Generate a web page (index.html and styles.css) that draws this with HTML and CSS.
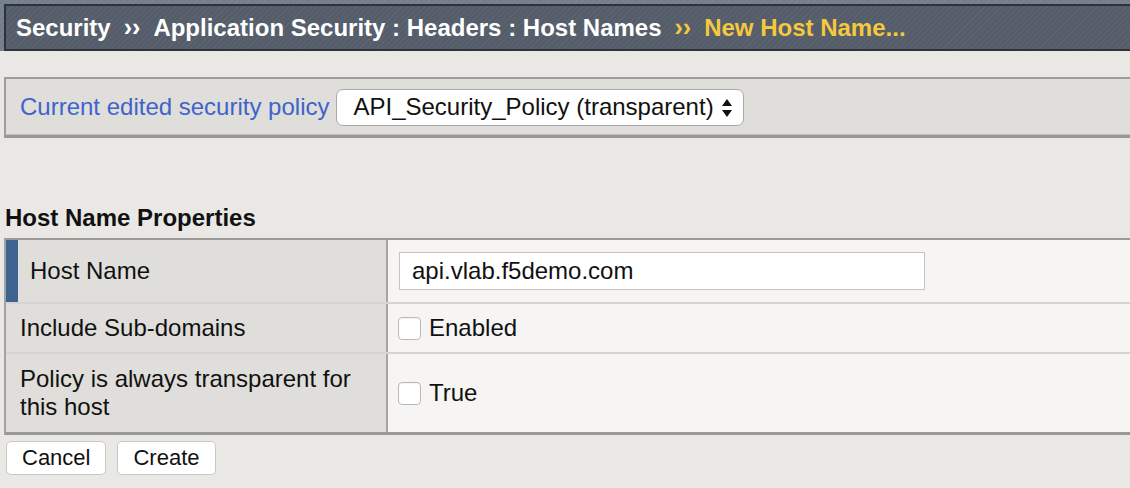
FILE: index.html
```html
<!DOCTYPE html>
<html>
<head>
<meta charset="utf-8">
<link rel="stylesheet" href="styles.css">
</head>
<body>
<div class="topband">
  <div class="crumbs">
    <span class="crumb">Security</span>
    <span class="sep">&rsaquo;&rsaquo;</span>
    <span class="crumb">Application Security : Headers : Host Names</span>
    <span class="sep cur">&rsaquo;&rsaquo;</span>
    <span class="crumb cur">New Host Name...</span>
  </div>
</div>

<div class="policybar">
  <span class="policylabel">Current edited security policy</span>
  <div class="select">
    <span>API_Security_Policy (transparent)</span>
    <svg class="arrows" width="12" height="20" viewBox="0 0 12 20"><path d="M6 1 L11 8 L1 8 Z" fill="#111"/><path d="M6 19 L11 12 L1 12 Z" fill="#111"/></svg>
  </div>
</div>

<h2 class="sectiontitle">Host Name Properties</h2>
<div class="props">
  <div class="row r1">
    <div class="label active">Host Name</div>
    <div class="value"><div class="textinput">api.vlab.f5demo.com</div></div>
  </div>
  <div class="row r2">
    <div class="label">Include Sub-domains</div>
    <div class="value"><span class="check"></span><span>Enabled</span></div>
  </div>
  <div class="row r3">
    <div class="label">Policy is always transparent for this host</div>
    <div class="value"><span class="check"></span><span>True</span></div>
  </div>
</div>
<div class="buttons">
  <div class="btn">Cancel</div>
  <div class="btn">Create</div>
</div>
</body>
</html>
```
FILE: styles.css
```css
html, body {
  margin: 0;
  padding: 0;
  background: #eae8e4;
  font-family: "Liberation Sans", Arial, Helvetica, sans-serif;
  color: #111;
  width: 1130px;
  height: 488px;
  overflow: hidden;
}
.topband {
  padding: 4px 0 0 4px;
  background: #737f8e repeating-linear-gradient(135deg, rgba(255,255,255,0.05) 0 1px, rgba(0,0,0,0) 1px 4px);
}
.crumbs {
  height: 43px;
  border: 2px solid #2f3237;
  border-right: none;
  background: #545d69 repeating-linear-gradient(135deg, rgba(255,255,255,0.045) 0 1px, rgba(0,0,0,0) 1px 4px);
  display: flex;
  align-items: center;
  padding-left: 10px;
  font-weight: bold;
  font-size: 24px;
  color: #ffffff;
  white-space: nowrap;
}
.sep {
  margin: 0 13px;
  font-size: 25px;
}
.cur { color: #f6c83e; }

.policybar {
  margin: 26px 0 0 4px;
  height: 56px;
  border-top: 2px solid #9e9c99;
  border-left: 2px solid #9e9c99;
  border-bottom: 3px solid #9a9896;
  box-shadow: inset 0 -1px 0 #c2c0bc;
  background: #dfdeda;
  display: flex;
  align-items: center;
  padding-left: 14px;
}
.policylabel {
  font-size: 24px;
  color: #3e64cc;
  margin-right: 7px;
}
.select {
  height: 35px;
  width: 406px;
  box-sizing: content-box;
  border: 1px solid #a9a9a9;
  border-radius: 7px;
  background: #fff;
  display: flex;
  align-items: center;
  font-size: 24px;
  color: #111;
  position: relative;
}
.select span { margin-left: 16px; }
.arrows { position: absolute; right: 10px; top: 8px; }

.sectiontitle {
  margin: 64px 0 0 5px;
  font-size: 24px;
  font-weight: bold;
  line-height: 32px;
  height: 32px;
  color: #111;
}
.props {
  margin: 4px 0 0 4px;
  border-top: 2px solid #9c9a97;
  border-left: 2px solid #a4a29f;
  border-bottom: 3px solid #9a9896;
}
.row {
  display: flex;
  border-bottom: 2px solid #d6d4d0;
}
.row.r3 { border-bottom: none; }
.r1 { height: 62px; }
.r2 { height: 48px; }
.r3 { height: 78px; }
.label {
  width: 366px;
  flex: none;
  background: #dfdeda;
  border-right: 2px solid #a8a6a3;
  padding-left: 14px;
  display: flex;
  align-items: center;
  font-size: 24px;
  line-height: 28px;
  color: #111;
}
.r3 .label { padding-right: 10px; width: 356px; }
.label.active {
  border-left: 12px solid #3d6390;
  padding-left: 12px;
  width: 356px;
}
.value {
  flex: 1;
  background: #f6f5f3;
  display: flex;
  align-items: center;
  padding-left: 10px;
  font-size: 24px;
  color: #111;
}
.textinput {
  width: 512px;
  height: 36px;
  border: 1px solid #c4c4c4;
  background: #fff;
  display: flex;
  align-items: center;
  padding-left: 12px;
  margin-left: 1px;
  font-size: 24px;
}
.check {
  width: 21px;
  height: 21px;
  border: 1px solid #b9b9b9;
  border-radius: 4px;
  background: #fff;
  margin-right: 8px;
  box-shadow: inset 0 1px 1px rgba(0,0,0,0.05);
}
.buttons {
  display: flex;
  gap: 11px;
  margin: 6px 0 0 6px;
}
.btn {
  height: 32px;
  padding: 0 15px;
  border: 1px solid #c8c8c8;
  border-radius: 5px;
  background: #fff;
  font-size: 22px;
  display: flex;
  align-items: center;
  color: #111;
}
```
